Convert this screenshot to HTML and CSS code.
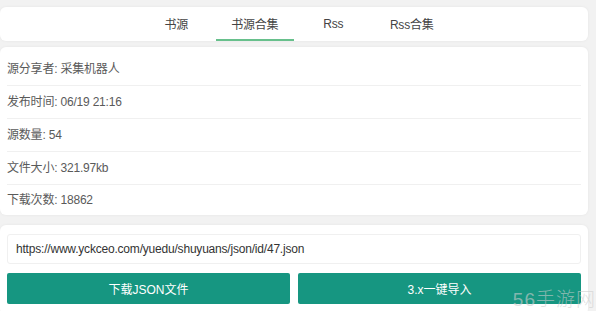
FILE: index.html
```html
<!DOCTYPE html>
<html lang="zh-CN">
<head>
  <meta charset="UTF-8" />
  <meta name="viewport" content="width=device-width, initial-scale=1.0"/>
  <title>书源合集</title>
  <link rel="stylesheet" href="styles.css">
</head>
<body>
  <div class="page">
    <nav class="card tabs">
      <a class="tab" href="#">书源</a>
      <a class="tab active" href="#">书源合集</a>
      <a class="tab" href="#">Rss</a>
      <a class="tab" href="#">Rss合集</a>
    </nav>

    <div class="card info">
      <div class="row">源分享者: 采集机器人</div>
      <div class="row">发布时间: 06/19 21:16</div>
      <div class="row">源数量: 54</div>
      <div class="row">文件大小: 321.97kb</div>
      <div class="row">下载次数: 18862</div>
    </div>

    <div class="card actions">
      <input class="link" type="text" value="https://www.yckceo.com/yuedu/shuyuans/json/id/47.json" readonly>
      <div class="buttons">
        <button>下载JSON文件</button>
        <button>3.x一键导入</button>
      </div>
    </div>
  </div>

  <div class="watermark">56手游网</div>
</body>
</html>
```

FILE: styles.css
```css
body {
  font-family: "Liberation Sans", Arial, "Noto Sans CJK SC", sans-serif;
  background-color: #f2f2f2;
  color: #5a5a5a;
  margin: 0;
  font-size: 12px;
  letter-spacing: -0.2px;
}

.page {
  width: 588px;
  padding-top: 7px;
}

.card {
  background-color: #fff;
  border-radius: 6px;
  box-shadow: 0 0 3px rgba(0,0,0,0.06);
}

.tabs {
  display: flex;
  justify-content: center;
  height: 34px;
}

.tab {
  width: 78.5px;
  display: flex;
  align-items: center;
  justify-content: center;
  text-decoration: none;
  color: #444;
  border-bottom: 2px solid transparent;
  box-sizing: border-box;
  padding-top: 1px;
}

.tab.active {
  border-bottom-color: #67c08c;
}

.info {
  margin-top: 6px;
  padding: 6px 7px 0;
}

.row {
  height: 33px;
  line-height: 33px;
  border-bottom: 1px solid #f0f0f0;
  box-sizing: border-box;
}

.row:last-child {
  border-bottom: none;
  height: 30px;
  line-height: 30px;
}

.actions {
  margin-top: 10px;
  padding: 9px 7px 8px;
  height: 90px;
  box-sizing: border-box;
}

.link {
  display: block;
  width: 574px;
  height: 30px;
  box-sizing: border-box;
  border: 1px solid #f0f0f0;
  border-radius: 3px;
  padding: 0 8px;
  font-family: inherit;
  font-size: 12px;
  letter-spacing: -0.2px;
  color: #333;
  background: #fff;
  outline: none;
}

.buttons {
  display: flex;
  gap: 8px;
  margin-top: 9px;
}

button {
  flex: 1;
  height: 31px;
  border: none;
  border-radius: 2px;
  background-color: #169681;
  color: #fff;
  font-family: inherit;
  font-size: 12px;
  cursor: pointer;
}

.watermark {
  position: absolute;
  right: 0;
  top: 284px;
  font-size: 19px;
  font-weight: 300;
  color: rgba(205,205,205,0.6);
  letter-spacing: 1px;
}
```
